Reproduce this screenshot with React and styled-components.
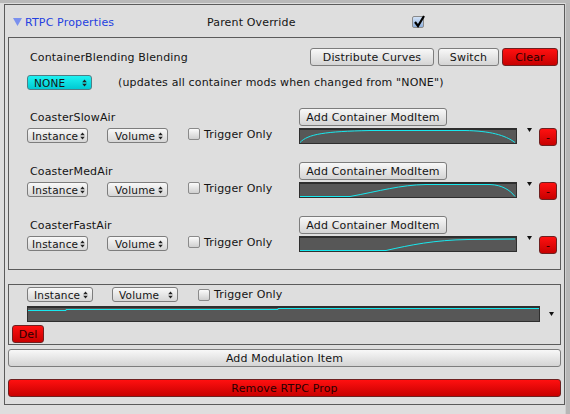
import React from 'react'
import styled, { createGlobalStyle } from 'styled-components'

const GlobalStyle = createGlobalStyle`
  html, body { margin: 0; padding: 0; }
  body {
    background: #dedede;
    font-family: "DejaVu Sans", Verdana, sans-serif;
    font-size: 11px;
    letter-spacing: 0.15px;
    color: #141414;
    overflow: hidden;
  }
`;

const Page = styled.div`
  display: flex;
  width: 570px;
  height: 414px;
  box-sizing: border-box;
  border-top: 3px solid #b9b9b9;
  background: #dedede;
`;

const Main = styled.div`
  flex: 1;
  padding: 1px 0 0 4px;
`;

const RightStrip = styled.div`
  width: 5px;
  background: #b7b7b7;
  border-left: 1px solid #d0d0d0;
`;

const Frame = styled.div`
  width: 561px;
  height: 401px;
  box-sizing: border-box;
  border: 1px solid #5b5b5b;
  padding: 0 3px;
  display: flex;
  flex-direction: column;
`;

const Header = styled.div`
  height: 32px;
  display: flex;
  align-items: center;
  padding-top: 2px;
  box-sizing: border-box;
`;

const Foldout = styled.div`
  width: 199px;
  display: flex;
  align-items: center;
  gap: 3px;
  padding-left: 5px;
  box-sizing: border-box;
  color: #2440e0;
`;

const OverrideLabel = styled.div`
  width: 205px;
`;

const Panel = styled.div`
  border: 1px solid #5b5b5b;
  box-sizing: border-box;
  height: ${p => p.$h}px;
  padding: ${p => p.$pad};
  margin-top: ${p => p.$mt || 0}px;
  display: flex;
  flex-direction: column;
`;

const Row = styled.div`
  display: flex;
  align-items: center;
  height: ${p => p.$h || 18}px;
  margin-top: ${p => p.$mt || 0}px;
  margin-left: ${p => p.$ml || 0}px;
`;

const Label = styled.span`
  margin-left: ${p => p.$ml || 0}px;
  white-space: nowrap;
`;

const Spacer = styled.div`
  flex: 1;
`;

const Button = styled.button`
  font: inherit;
  letter-spacing: 0.15px;
  height: 18px;
  width: ${p => (p.$w ? p.$w + 'px' : 'auto')};
  padding: 0;
  box-sizing: border-box;
  border: 1px solid ${p => (p.$red ? '#6e2020' : '#7d7d7d')};
  border-radius: 3px;
  background: ${p => p.$red
    ? 'linear-gradient(#ff1010, #c80000)'
    : 'linear-gradient(#f8f8f8, #d4d4d4)'};
  color: ${p => (p.$red ? '#2a0000' : '#141414')};
  display: flex;
  align-items: center;
  justify-content: center;
  white-space: nowrap;
  flex: none;
  margin-left: ${p => p.$ml || 0}px;
  margin-top: ${p => p.$mt || 0}px;
`;

const WideButton = styled(Button)`
  width: 553px;
`;

const Popup = styled.div`
  width: ${p => p.$w}px;
  height: 15px;
  box-sizing: border-box;
  border: 1px solid ${p => (p.$cyan ? '#4f7f86' : '#7d7d7d')};
  border-radius: 3px;
  background: ${p => p.$cyan
    ? 'linear-gradient(#1ef2f2, #00c9d2)'
    : 'linear-gradient(#f8f8f8, #d6d6d6)'};
  display: flex;
  align-items: center;
  gap: 1px;
  padding: 0 ${p => p.$pr || 4}px 0 ${p => p.$pl || 6}px;
  margin-left: ${p => p.$ml || 0}px;
  font-size: 10.5px;
  letter-spacing: 0.2px;
  white-space: nowrap;
  flex: none;
`;

const PopupText = styled.span`
  flex: 1;
`;

const Check = styled.div`
  width: 12px;
  height: 12px;
  box-sizing: border-box;
  border: 1px solid #8a8a8a;
  border-radius: 2px;
  background: ${p => p.$on
    ? 'linear-gradient(#d2e2f6, #8fb1de)'
    : 'linear-gradient(#fbfbfb, #cfcfcf)'};
  margin-left: ${p => p.$ml || 0}px;
  margin-right: 4px;
  position: relative;
  flex: none;
`;

const Tick = styled.svg`
  position: absolute;
  left: 0;
  top: -2px;
`;

const CurveBox = styled.div`
  width: ${p => p.$w}px;
  height: ${p => p.$h || 16}px;
  box-sizing: border-box;
  background: #575757;
  border: 1px solid #2e2e2e;
  border-top-width: 2px;
  flex: none;
  overflow: hidden;
  svg { display: block; }
`;

const Caret = styled.svg`
  margin-left: ${p => p.$ml}px;
  flex: none;
`;

const Block = styled.div`
  display: grid;
  grid-template-columns: 272px 1fr;
  grid-template-rows: 18px 18px;
  row-gap: 2px;
  margin-top: ${p => p.$mt}px;
`;

const Cell = styled.div`
  display: flex;
  align-items: ${p => (p.$top ? 'flex-start' : 'center')};
`;

const Arrows = () => (
  <svg width="5" height="8" viewBox="0 0 5 8" style={{ flex: 'none' }}>
    <path d="M2.5 0.5 L4.8 3.2 L0.2 3.2Z M0.2 4.8 L4.8 4.8 L2.5 7.5Z" fill="#222" />
  </svg>
);

const Drop = ({ text, w, cyan, ml, pl, pr }) => (
  <Popup $w={w} $cyan={cyan} $ml={ml} $pl={pl} $pr={pr}>
    <PopupText>{text}</PopupText>
    <Arrows />
  </Popup>
);

const Curve = ({ d, w, h = 16 }) => (
  <CurveBox $w={w} $h={h}>
    <svg width={w - 2} height={h - 3}>
      <path d={d} fill="none" stroke="#18e8ee" strokeWidth="1" />
    </svg>
  </CurveBox>
);

const SmallCaret = ({ ml }) => (
  <Caret $ml={ml} width="5" height="4" viewBox="0 0 5 4">
    <path d="M0 0 H5 L2.5 4Z" fill="#111" />
  </Caret>
);

const mods = [
  { name: 'CoasterSlowAir', d: 'M0 12.5 C 8 4, 25 1.5, 70 0.5 L 165 0.5 C 190 1, 205 5, 215 12.5' },
  { name: 'CoasterMedAir', d: 'M0 12.5 L 50 12.5 C 80 7, 100 1, 126 0.5 L 190 0.5 C 202 1, 210 6, 215 12.5' },
  { name: 'CoasterFastAir', d: 'M0 12.5 L 86 12.5 C 110 7, 135 2, 168 1.5 L 215 1' },
];

function ModBlock({ mod, mt }) {
  return (
    <Block $mt={mt}>
      <Cell><Label $ml={3}>{mod.name}</Label></Cell>
      <Cell><Button $w={148}>Add Container ModItem</Button></Cell>
      <Cell $top>
        <Drop text="Instance" w={61} pl={4} pr={2} />
        <Drop text="Volume" w={61} ml={19} pl={7} />
        <Check $ml={20} />
        <Label>Trigger Only</Label>
      </Cell>
      <Cell $top>
        <Curve w={218} d={mod.d} />
        <SmallCaret ml={10} />
        <Button $red $w={18} $ml={7}>-</Button>
      </Cell>
    </Block>
  );
}

export default function App() {
  return (
    <>
      <GlobalStyle />
      <Page>
        <Main>
          <Frame>
            <Header>
              <Foldout>
                <svg width="9" height="8" viewBox="0 0 9 8">
                  <path d="M0 0 H9 L4.5 8Z" fill="#7a90ee" />
                </svg>
                RTPC Properties
              </Foldout>
              <OverrideLabel>Parent Override</OverrideLabel>
              <Check $on>
                <Tick width="12" height="13" viewBox="0 0 12 13">
                  <path d="M2 7 L5 11 L11 1" fill="none" stroke="#000" strokeWidth="2.2" />
                </Tick>
              </Check>
            </Header>

            <Panel $h={233} $pad="10px 2px 0 18px">
              <Row>
                <Label $ml={3}>ContainerBlending Blending</Label>
                <Spacer />
                <Button $w={124}>Distribute Curves</Button>
                <Button $w={61} $ml={4}>Switch</Button>
                <Button $red $w={56} $ml={3}>Clear</Button>
              </Row>
              <Row $h={15} $mt={9}>
                <Drop text="NONE" w={65} cyan />
                <Label $ml={26}>(updates all container mods when changed from "NONE")</Label>
              </Row>
              {mods.map((m, i) => (
                <ModBlock key={m.name} mod={m} mt={i === 0 ? 18 : 16} />
              ))}
            </Panel>

            <Panel $h={61} $pad="2px 0 0 3px" $mt={14}>
              <Row $h={15} $ml={15}>
                <Drop text="Instance" w={66} />
                <Drop text="Volume" w={66} ml={19} />
                <Check $ml={20} />
                <Label>Trigger Only</Label>
              </Row>
              <Row $h={16} $mt={4} $ml={15}>
                <Curve w={513} d="M0 2.5 L 38 2.5 L 38 1.5 L 250 1.5 L 250 0.5 L 511 0.5" />
                <SmallCaret ml={9} />
              </Row>
              <Row $mt={3}>
                <Button $red $w={32}>Del</Button>
              </Row>
            </Panel>

            <WideButton $mt={4}>Add Modulation Item</WideButton>
            <WideButton $red $mt={12}>Remove RTPC Prop</WideButton>
          </Frame>
        </Main>
        <RightStrip />
      </Page>
    </>
  );
}
